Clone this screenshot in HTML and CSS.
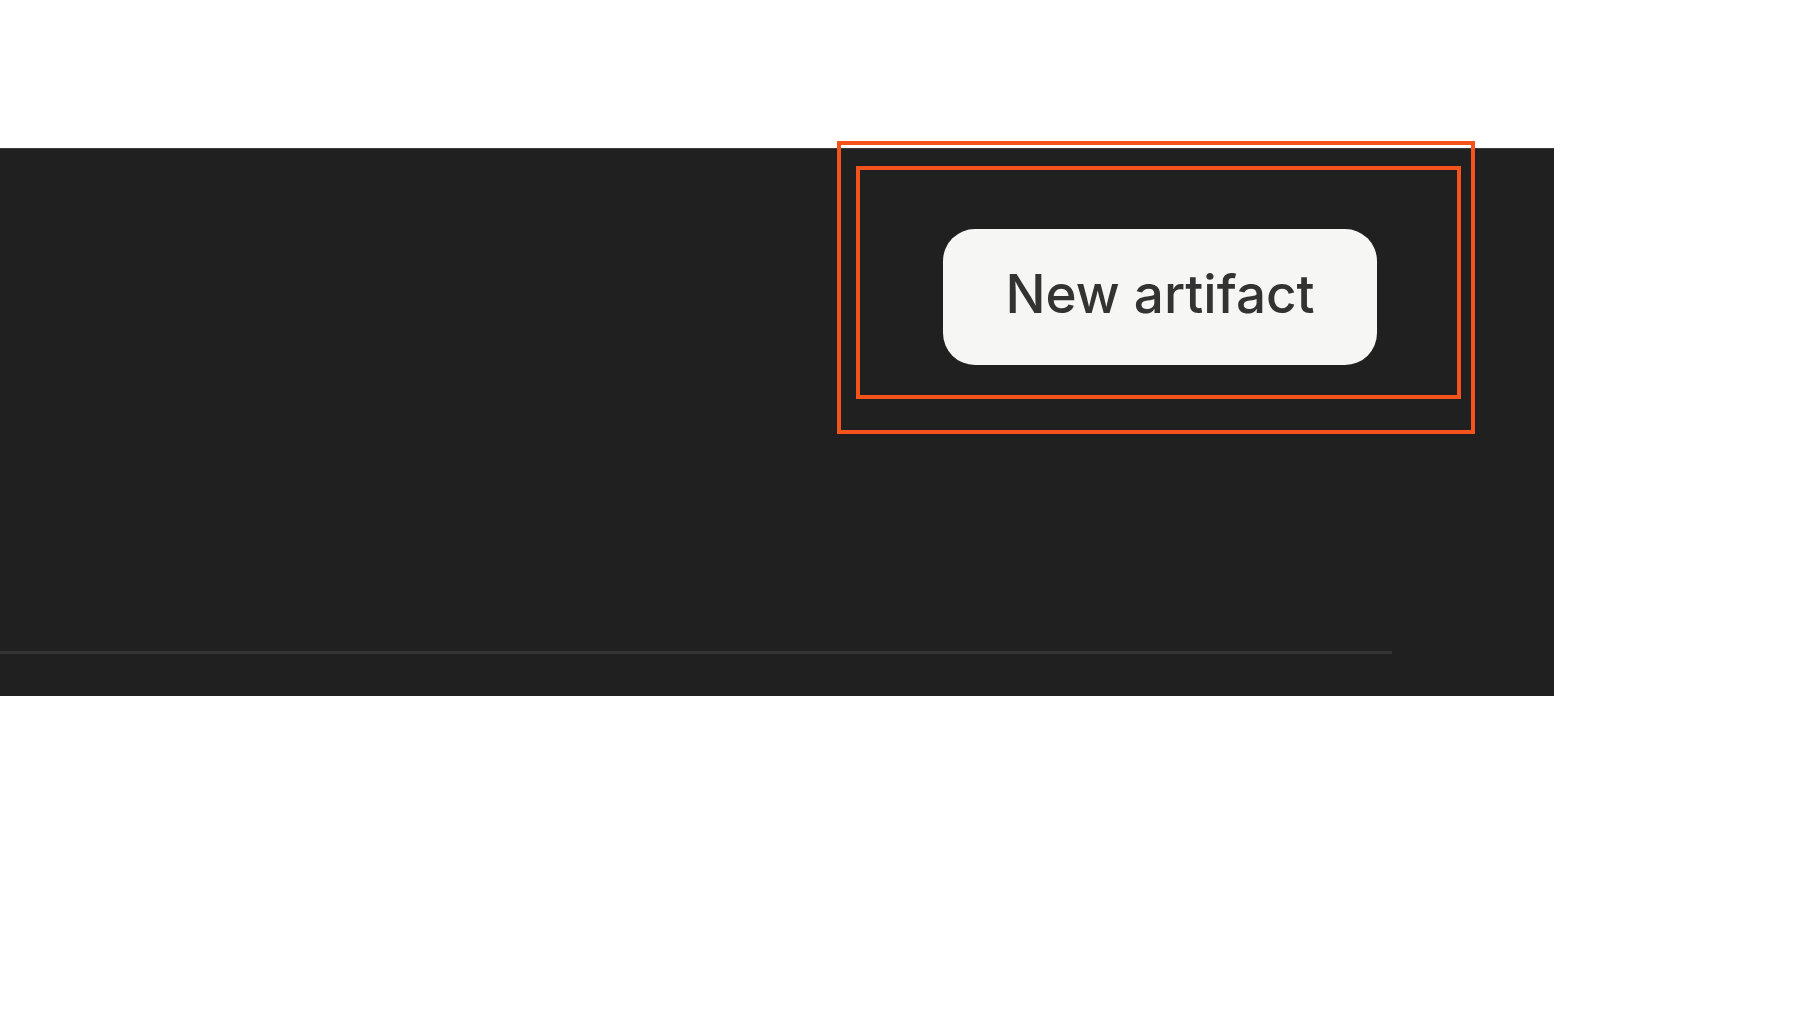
FILE: index.html
```html
<!DOCTYPE html>
<html>
<head>
<meta charset="utf-8">
<title>New artifact</title>
<link rel="stylesheet" href="styles.css">
</head>
<body>
<div class="page">
  <section class="panel">
    <div class="panel-content">
      <div class="toolbar">
        <button class="btn-new">New artifact</button>
      </div>
      <div class="divider"></div>
    </div>
  </section>
  <div class="highlight highlight-outer"></div>
  <div class="highlight highlight-inner"></div>
</div>
</body>
</html>
```
FILE: styles.css
```css
html, body {
  margin: 0;
  padding: 0;
  background: #ffffff;
}
.page {
  position: relative;
  width: 1800px;
  height: 1011px;
  padding-top: 148px;
  box-sizing: border-box;
}
.panel {
  width: 1554px;
  height: 548px;
  background: #202020;
  border-top: 1px solid #3a3a3a;
  box-sizing: border-box;
}
.panel-content {
  width: 1392px;
  display: flex;
  flex-direction: column;
}
.toolbar {
  display: flex;
  justify-content: flex-end;
  padding-top: 80px;
  padding-right: 15px;
}
.btn-new {
  width: 434px;
  height: 136px;
  border: none;
  border-radius: 32px;
  background: #f6f6f4;
  color: #333333;
  font-family: Inter, "Liberation Sans", sans-serif;
  font-size: 53px;
  font-weight: 500;
  padding: 0 0 6px 0;
  display: flex;
  align-items: center;
  justify-content: center;
}
.divider {
  margin-top: 286px;
  height: 3px;
  background: #343434;
}
.highlight {
  position: absolute;
  border: 4px solid #f4541c;
  box-sizing: border-box;
}
.highlight-outer {
  left: 837px;
  top: 141px;
  width: 638px;
  height: 293px;
}
.highlight-inner {
  left: 856px;
  top: 166px;
  width: 605px;
  height: 233px;
}
```
